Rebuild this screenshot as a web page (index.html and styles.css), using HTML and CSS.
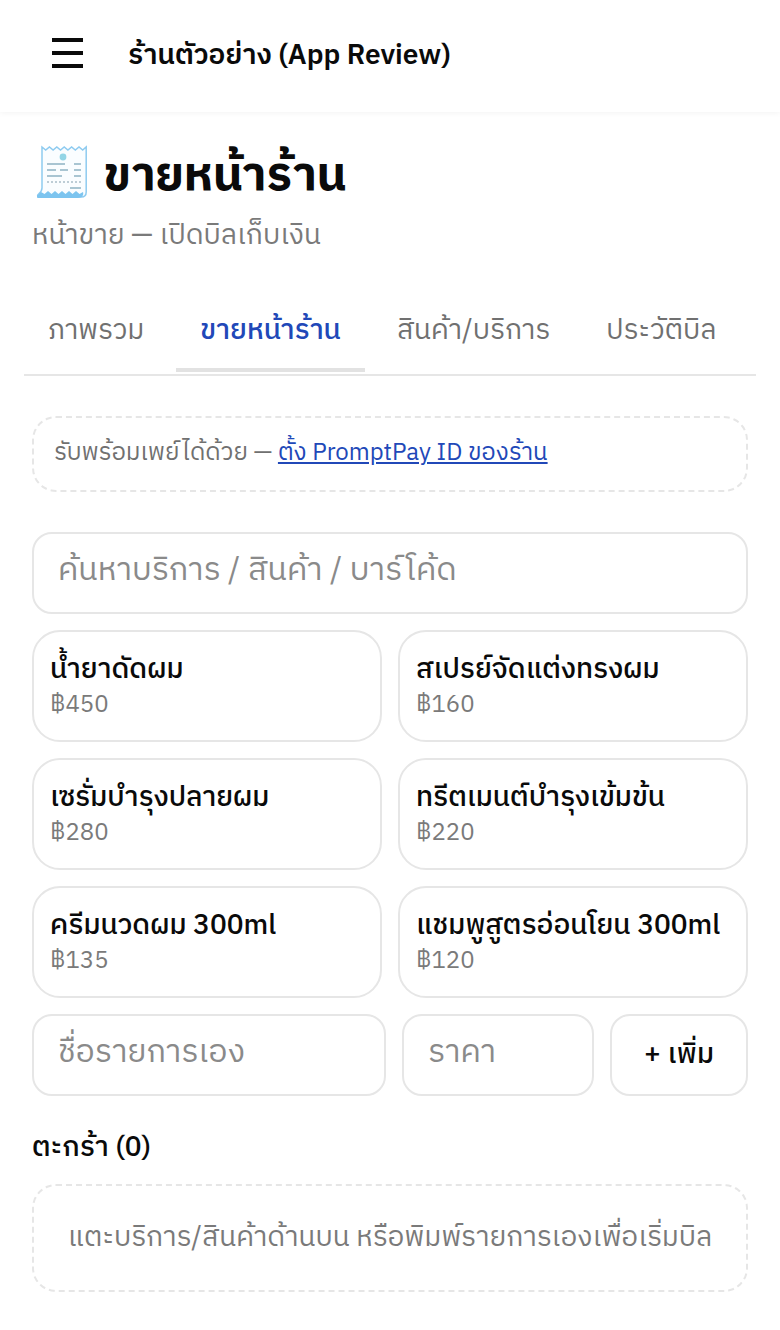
FILE: index.html
```html
<!DOCTYPE html>
<html lang="th">

<head>
  <meta charset="UTF-8">
  <title>ขายหน้าร้าน</title>
  <link rel="stylesheet" href="styles.css">
</head>
<body>
  <header class="topbar">
    <button class="menu-btn" aria-label="menu">
      <span></span>
      <span></span>
      <span></span>
    </button>
    <div class="shop-name">ร้านตัวอย่าง (App Review)</div>
  </header>

  <main class="page">
    <h1 class="title">
      <svg class="title-icon" viewBox="0 0 54 54" width="54" height="54">
        <path d="M6 3l3.700 3 3.700-3 3.700 3 3.700-3 3.700 3 3.700-3 3.700 3 3.700-3 3.700 3 3.700-3 3.700 3 3.500-3V48c0 3-2 5-5 5H3c-1.500 0-2-2-.5-3 2-1.500 3.500-3 3.500-6z" fill="#fafdff" stroke="#8ecbf0" stroke-width="1.500" />
        <circle cx="27" cy="13" r="3.400" fill="#93d5e6" />
        <path d="M11 20h18M38 20h7M11 26h9M24 26h8M38 26h7M11 32h15M38 32h7M34 44h11" stroke="#8fb3c4" stroke-width="1.400" fill="none" />
        <path d="M11 38h34" stroke="#a9bdc9" stroke-width="1.400" stroke-dasharray="2 2" fill="none" />
        <path d="M1 52c1-2 3-3 4-4l3.500 2 3.500-3 3.500 3 3.500-3 3.500 3 3.500-3 3.500 3 3.500-3 3.500 3 3.500-3 3.500 3 3.500-2c1 3-1 6-5 6H3c-1 0-2 0-2-1z" fill="#7cc4ef" />
      </svg>
      <span>ขายหน้าร้าน</span>
    </h1>
    <p class="subtitle">หน้าขาย — เปิดบิลเก็บเงิน</p>

    <nav class="tabs">
      <a class="tab">ภาพรวม</a>
      <a class="tab active">ขายหน้าร้าน</a>
      <a class="tab">สินค้า/บริการ</a>
      <a class="tab">ประวัติบิล</a>
    </nav>

    <div class="notice">รับพร้อมเพย์ได้ด้วย — <a href="#">ตั้ง PromptPay ID ของร้าน</a></div>

    <input class="field search" placeholder="ค้นหาบริการ / สินค้า / บาร์โค้ด">

    <div class="products">
      <button class="product"><b>น้ำยาดัดผม</b><span>฿450</span></button>
      <button class="product"><b>สเปรย์จัดแต่งทรงผม</b><span>฿160</span></button>
      <button class="product"><b>เซรั่มบำรุงปลายผม</b><span>฿280</span></button>
      <button class="product"><b>ทรีตเมนต์บำรุงเข้มข้น</b><span>฿220</span></button>
      <button class="product"><b>ครีมนวดผม 300ml</b><span>฿135</span></button>
      <button class="product"><b>แชมพูสูตรอ่อนโยน 300ml</b><span>฿120</span></button>
    </div>

    <div class="custom-row">
      <input class="field custom-name" placeholder="ชื่อรายการเอง">
      <input class="field custom-price" placeholder="ราคา">
      <button class="add-btn">+ เพิ่ม</button>
    </div>

    <h2 class="cart-title">ตะกร้า (0)</h2>
    <div class="cart-empty">แตะบริการ/สินค้าด้านบน หรือพิมพ์รายการเองเพื่อเริ่มบิล</div>
  </main>
</body>

</html>
```

FILE: styles.css
```css
* {
  margin: 0;
  padding: 0;
  box-sizing: border-box;
}

body {
  background: #fff;
  color: #0a0a0a;
  font-family: "IBM Plex Sans Thai", Inter, "Noto Sans", sans-serif;
}

.topbar {
  height: 112px;
  display: flex;
  align-items: center;
  padding-left: 52px;
  gap: 45px;
  box-shadow: 0 1px 6px rgba(0, 0, 0, 0.05);
}

.menu-btn {
  width: 31px;
  height: 30px;
  border: 0;
  background: none;
  display: flex;
  flex-direction: column;
  justify-content: space-between;
  margin-top: -7px;
}

.menu-btn span {
  height: 4px;
  background: #0a0a0a;
}

.shop-name {
  font-size: 28px;
  font-weight: 600;
}

.page {
  padding: 28px 24px 0;
}

.title {
  display: flex;
  align-items: center;
  gap: 14px;
  margin-left: 8px;
  font-size: 47.2px;
  font-weight: 700;
  line-height: 72px;
}

.title-icon {
  flex: none;
  margin: -10px 0 0 4px;
}

.subtitle {
  margin-left: 8px;
  color: #7a7a7a;
  font-size: 28px;
  line-height: 48px;
}

.tabs {
  display: flex;
  gap: 8px;
  margin-top: 38px;
  border-bottom: 2px solid #e6e6e6;
  height: 78px;
}

.tab {
  padding: 0 24px;
  height: 74px;
  line-height: 66px;
  font-size: 28px;
  color: #707070;
  white-space: nowrap;
}

.tab.active {
  color: #2148b8;
  font-weight: 500;
  border-bottom: 4px solid #e2e2e2;
}

.notice {
  margin: 40px 8px 0;
  height: 76px;
  line-height: 70px;
  padding-left: 20px;
  border: 2px dashed #e6e6e6;
  border-radius: 24px;
  font-size: 24px;
  color: #707070;
}

.notice a {
  color: #2148b8;
}

.field {
  display: block;
  height: 82px;
  border: 2px solid #e6e6e6;
  border-radius: 20px;
  padding: 0 24px 6px;
  font-family: inherit;
  font-size: 32px;
  color: #0a0a0a;
  background: #fff;
  outline: none;
}

.field::placeholder {
  color: #8a8a8a;
  opacity: 1;
}

.search {
  width: 716px;
  margin: 40px 8px 0;
}

.products {
  display: grid;
  grid-template-columns: 350px 350px;
  gap: 16px;
  margin: 16px 8px 0;
}

.product {
  height: 112px;
  display: flex;
  flex-direction: column;
  align-items: flex-start;
  padding: 16px 16px 0;
  background: #fff;
  border: 2px solid #e6e6e6;
  border-radius: 28px;
  font-family: inherit;
  color: #0a0a0a;
}

.product b {
  font-size: 28px;
  font-weight: 500;
  line-height: 44px;
  white-space: nowrap;
}

.product span {
  font-size: 24px;
  line-height: 26px;
  color: #7a7a7a;
}

.custom-row {
  display: flex;
  gap: 16px;
  margin: 16px 8px 0;
}

.custom-name {
  width: 354px;
}

.custom-price {
  width: 192px;
}

.add-btn {
  width: 138px;
  height: 82px;
  background: #fff;
  border: 2px solid #e6e6e6;
  border-radius: 20px;
  font-family: inherit;
  font-size: 28px;
  font-weight: 500;
  color: #0a0a0a;
}

.cart-title {
  margin: 31px 8px 0;
  font-size: 28px;
  font-weight: 500;
  line-height: 42px;
}

.cart-empty {
  margin: 15px 8px 0;
  height: 108px;
  line-height: 104px;
  text-align: center;
  border: 2px dashed #e6e6e6;
  border-radius: 24px;
  font-size: 28px;
  color: #7a7a7a;
}
```
